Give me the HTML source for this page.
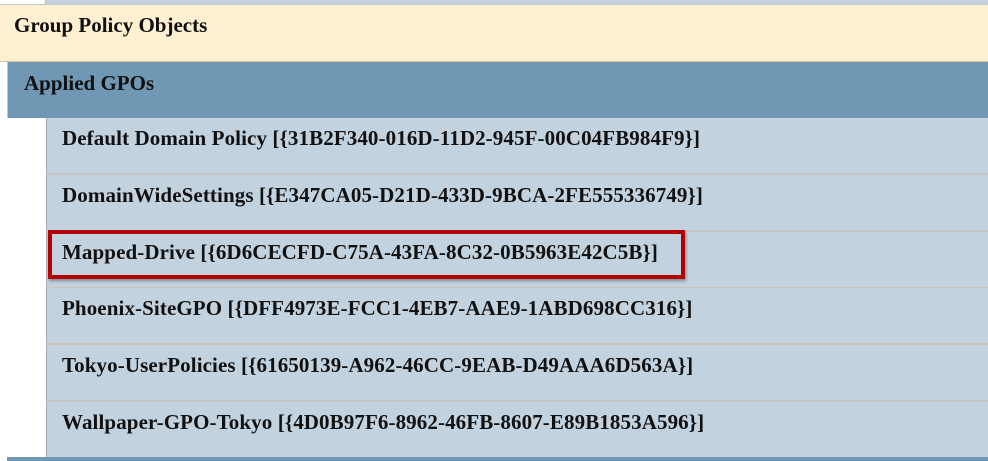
<!DOCTYPE html>
<html><head><style>
body{margin:0;width:988px;height:461px;overflow:hidden;background:#fff;font-family:"Liberation Serif",serif;font-weight:bold;color:#111;position:relative}
div{position:absolute;box-sizing:border-box;white-space:nowrap}
.top{left:45px;top:0;width:943px;height:5px;background:#c2d3df;border-left:1px solid #bbb}
.hdr{left:0;top:4px;width:988px;height:58px;background:#fff0d2;border-top:1px solid #c8c8c8;border-bottom:1px solid #d0c4a8;font-size:21px;padding:8px 0 0 14px}
.app{left:7px;top:62px;width:981px;height:56px;background:#7097b3;border-left:1px solid #c0c8d0;font-size:21px;padding:9px 0 0 16px}
.row{left:46px;width:942px;height:57px;background:#c2d3df;border-left:1px solid #aab;border-bottom:2px solid #c8c4c4;font-size:21px;padding:8px 0 0 15px;letter-spacing:0.1px}
.bot{left:7px;top:457px;width:981px;height:4px;background:#7097b3}
.red{left:48px;top:230px;width:637px;height:49px;border:4px solid #b30000;box-shadow:1px 2px 3px rgba(0,0,0,.35)}
</style></head><body>
<div class="top"></div>
<div class="hdr">Group Policy Objects</div>
<div class="app">Applied GPOs</div>
<div class="row" style="top:118px">Default Domain Policy [{31B2F340-016D-11D2-945F-00C04FB984F9}]</div>
<div class="row" style="top:175px">DomainWideSettings [{E347CA05-D21D-433D-9BCA-2FE555336749}]</div>
<div class="row" style="top:232px">Mapped-Drive [{6D6CECFD-C75A-43FA-8C32-0B5963E42C5B}]</div>
<div class="row" style="top:288px">Phoenix-SiteGPO [{DFF4973E-FCC1-4EB7-AAE9-1ABD698CC316}]</div>
<div class="row" style="top:345px">Tokyo-UserPolicies [{61650139-A962-46CC-9EAB-D49AAA6D563A}]</div>
<div class="row" style="top:402px;height:56px;border-bottom:none">Wallpaper-GPO-Tokyo [{4D0B97F6-8962-46FB-8607-E89B1853A596}]</div>
<div class="bot"></div>
<div class="red"></div>
</body></html>
